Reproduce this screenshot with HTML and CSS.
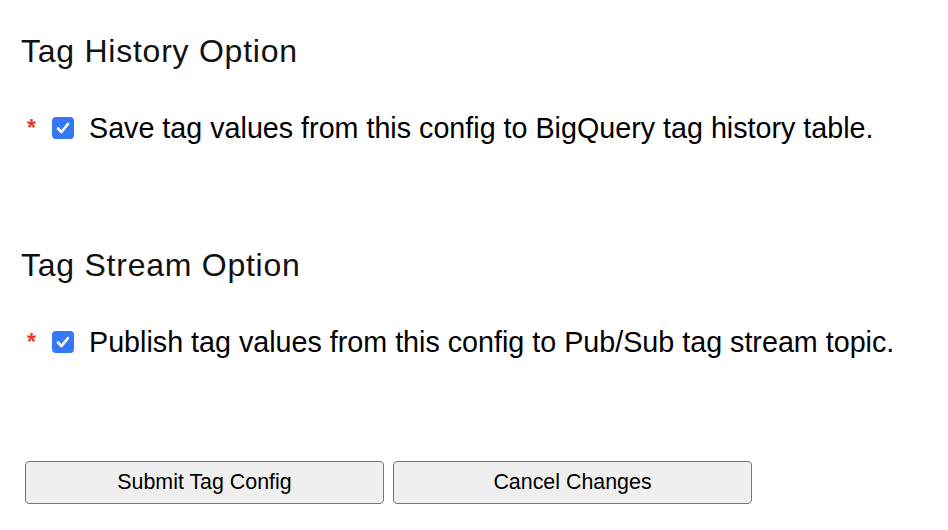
FILE: index.html
```
<!DOCTYPE html>
<html>
<head>
<meta charset="utf-8">
<link rel="stylesheet" href="styles.css">
</head>
<body>
<div class="page">
  <section class="option">
    <h2 class="title">Tag History Option</h2>
    <div class="row">
      <span class="req">*</span>
      <span class="check"><svg viewBox="0 0 22 22" width="22" height="22"><path d="M6 11.5 L9.5 15 L16 7" fill="none" stroke="#fff" stroke-width="2.6" stroke-linecap="round" stroke-linejoin="round"/></svg></span>
      <span class="label">Save tag values from this config to BigQuery tag history table.</span>
    </div>
  </section>
  <section class="option second">
    <h2 class="title">Tag Stream Option</h2>
    <div class="row">
      <span class="req">*</span>
      <span class="check"><svg viewBox="0 0 22 22" width="22" height="22"><path d="M6 11.5 L9.5 15 L16 7" fill="none" stroke="#fff" stroke-width="2.6" stroke-linecap="round" stroke-linejoin="round"/></svg></span>
      <span class="label">Publish tag values from this config to Pub/Sub tag stream topic.</span>
    </div>
  </section>
  <div class="buttons">
    <button class="btn">Submit Tag Config</button>
    <button class="btn">Cancel Changes</button>
  </div>
</div>
</body>
</html>
```
FILE: styles.css
```
html, body {
  margin: 0;
  padding: 0;
  background: #fff;
}
body {
  font-family: "Liberation Sans", Arial, sans-serif;
  color: #000;
}
.page {
  padding: 31px 0 0 21px;
}
.title {
  margin: 0;
  font-size: 32px;
  line-height: 40px;
  font-weight: 400;
  letter-spacing: 0.75px;
  color: #111;
}
.row {
  display: flex;
  align-items: center;
  height: 36px;
  margin-top: 39px;
}
.second {
  margin-top: 99px;
}
.req {
  color: #e8392b;
  font-size: 23px;
  font-weight: 700;
  width: 31px;
  padding-left: 6px;
  box-sizing: border-box;
  line-height: 36px;
}
.check {
  display: flex;
  width: 22px;
  height: 22px;
  background: #3478f6;
  border-radius: 4px;
}
.label {
  font-size: 28.7px;
  margin-left: 15px;
  white-space: nowrap;
}
.buttons {
  display: flex;
  gap: 9px;
  margin: 101px 0 0 4px;
}
.btn {
  width: 359px;
  height: 43px;
  background: #efefef;
  border: 1px solid #767676;
  border-radius: 4px;
  font-family: "Liberation Sans", Arial, sans-serif;
  font-size: 21.4px;
  color: #000;
  padding: 0;
}
```
